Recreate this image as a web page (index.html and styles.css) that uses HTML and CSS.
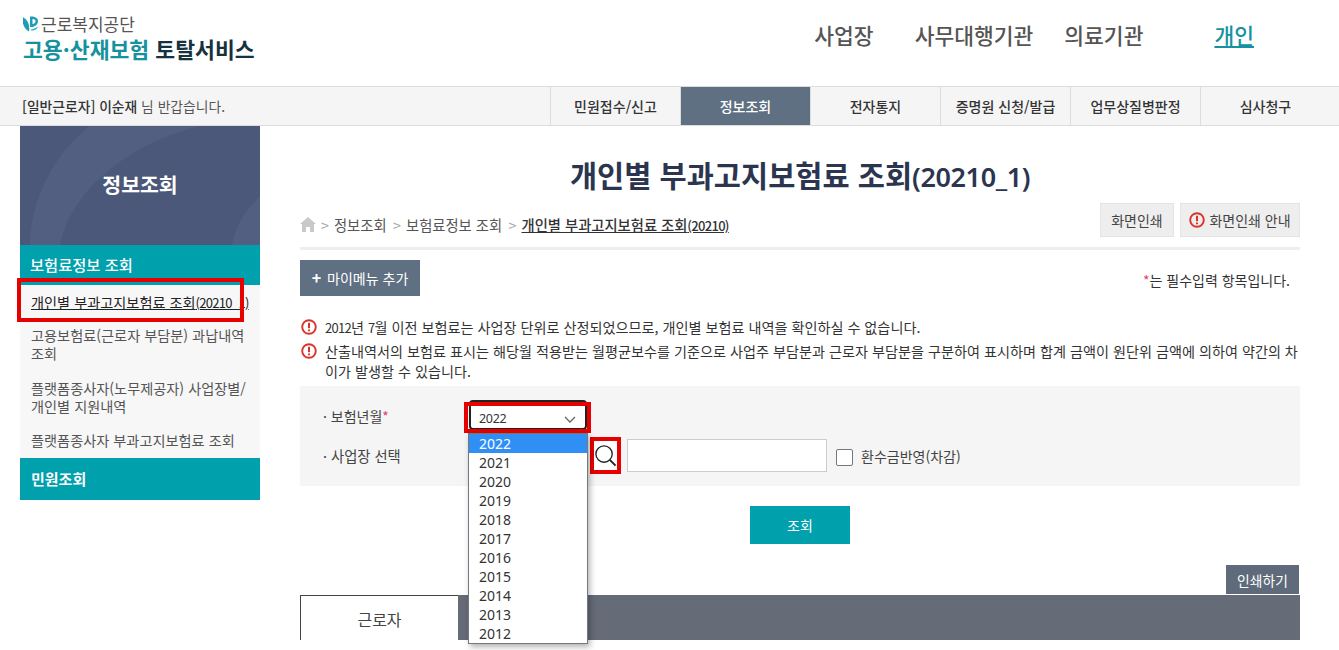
FILE: index.html
```html
<!DOCTYPE html>
<html lang="ko">
<head>
  <meta charset="UTF-8" />
  <title>개인별 부과고지보험료 조회</title>
  <link rel="stylesheet" href="styles.css">
</head>
<body>

<header class="top">
  <div class="brand">
    <div class="brand-org">
      <svg class="brand-mark" viewBox="0 0 15 16" width="15" height="16">
        <path d="M0 1 C-1 8 1 13 6 15.500 C7 9 5 4 0 1Z" fill="#1f9db5"/>
        <path d="M7 0.500 L7 11 C11 11.500 15 9 15 5 C15 1.500 11 0 7 0.500Z" fill="#1f9db5"/>
        <path d="M7 14 C10 15.500 14 14 15 10.500 C13 12 10 13 7 14Z" fill="#2fb0c0"/>
        <path d="M9.500 3 L9.500 8 C11.500 8 12.500 6.500 12.500 5 C12.500 4 11.500 3 9.500 3Z" fill="#fff"/>
      </svg>
      <span>근로복지공단</span>
    </div>
    <div class="brand-name"><em>고용·산재보험</em> 토탈서비스</div>
  </div>
  <nav class="top-nav">
    <a>사업장</a>
    <a>사무대행기관</a>
    <a>의료기관</a>
    <a class="on">개인</a>
  </nav>
</header>

<div class="subbar">
  <p class="hello">[일반근로자] 이순재 <span>님 반갑습니다.</span></p>
  <ul class="tabs">
    <li>민원접수/신고</li>
    <li class="on">정보조회</li>
    <li>전자통지</li>
    <li>증명원 신청/발급</li>
    <li>업무상질병판정</li>
    <li>심사청구</li>
  </ul>
</div>

<div class="wrap">
  <aside class="side">
    <div class="side-hero">
      <svg class="side-bg" viewBox="0 0 240 119" preserveAspectRatio="none">
        <path d="M40 119 C50 70 100 20 180 0 L70 0 C30 30 10 80 10 119Z" fill="#535f80"/>
        <path d="M240 70 C225 85 215 100 212 119 L240 119Z" fill="#535f80"/>
      </svg>
      <strong>정보조회</strong>
    </div>
    <h3 class="side-head">보험료정보 조회</h3>
    <ul class="side-list">
      <li class="cur"><a>개인별 부과고지보험료 조회<span class="num">(20210_1)</span></a><i class="mark mark-side"></i></li>
      <li>고용보험료(근로자 부담분) 과납내역 조회</li>
      <li>플랫폼종사자(노무제공자) 사업장별/ 개인별 지원내역</li>
      <li>플랫폼종사자 부과고지보험료 조회</li>
    </ul>
    <h3 class="side-head side-head2">민원조회</h3>
  </aside>

  <main class="main">
    <h1>개인별 부과고지보험료 조회<span class="h1-num">(20210_1)</span></h1>

    <div class="crumbs">
      <div class="crumb-path">
        <svg viewBox="0 0 16 15" width="16" height="15"><path d="M8 0 L16 7 L14 7 L14 15 L10 15 L10 10 L6 10 L6 15 L2 15 L2 7 L0 7Z" fill="#c9c9c9"/></svg>
        <span class="gt">&gt;</span><span class="crumb">정보조회</span>
        <span class="gt">&gt;</span><span class="crumb">보험료정보 조회</span>
        <span class="gt">&gt;</span><b>개인별 부과고지보험료 조회<span class="num">(20210)</span></b>
      </div>
      <div class="crumb-btns">
        <button class="gray-btn btn-print">화면인쇄</button>
        <button class="gray-btn btn-guide">
          <svg class="warn" viewBox="0 0 16 16" width="16" height="16"><circle cx="8" cy="8" r="6.800" fill="none" stroke="#d9342b" stroke-width="1.900"/><path d="M8 3.800V9.200M8 10.600V12.200" stroke="#d9342b" stroke-width="2"/></svg>
          화면인쇄 안내
        </button>
      </div>
    </div>

    <div class="tools">
      <button class="menu-add"><b>+</b> 마이메뉴 추가</button>
      <p class="req"><span>*</span>는 필수입력 항목입니다.</p>
    </div>

    <ul class="notes">
      <li>
        <svg class="warn" viewBox="0 0 16 16" width="16" height="16"><circle cx="8" cy="8" r="6.800" fill="none" stroke="#d9342b" stroke-width="1.900"/><path d="M8 3.800V9.200M8 10.600V12.200" stroke="#d9342b" stroke-width="2"/></svg>
        <span><span class="num">2012</span>년 <span class="num">7</span>월 이전 보험료는 사업장 단위로 산정되었으므로, 개인별 보험료 내역을 확인하실 수 없습니다.</span>
      </li>
      <li>
        <svg class="warn" viewBox="0 0 16 16" width="16" height="16"><circle cx="8" cy="8" r="6.800" fill="none" stroke="#d9342b" stroke-width="1.900"/><path d="M8 3.800V9.200M8 10.600V12.200" stroke="#d9342b" stroke-width="2"/></svg>
        <span>산출내역서의 보험료 표시는 해당월 적용받는 월평균보수를 기준으로 사업주 부담분과 근로자 부담분을 구분하여 표시하며 합계 금액이 원단위 금액에 의하여 약간의 차이가 발생할 수 있습니다.</span>
      </li>
    </ul>

    <div class="search-box">
      <div class="row">
        <label class="lbl lbl-year">· 보험년월<span>*</span></label>
        <div class="select-wrap">
          <div class="select">2022
            <svg viewBox="0 0 12 7" width="12" height="7"><path d="M1 1 L6 6 L11 1" fill="none" stroke="#666" stroke-width="1.300"/></svg>
          </div>
          <i class="mark mark-select"></i>
          <ul class="dropdown">
            <li class="sel">2022</li>
            <li>2021</li><li>2020</li><li>2019</li><li>2018</li><li>2017</li>
            <li>2016</li><li>2015</li><li>2014</li><li>2013</li><li>2012</li>
          </ul>
        </div>
      </div>
      <div class="row row2">
        <label class="lbl">· 사업장 선택</label>
        <div class="spacer"></div>
        <div class="find">
          <svg viewBox="0 0 24 24" width="23" height="23"><circle cx="10.500" cy="10.500" r="8.500" fill="none" stroke="#222" stroke-width="1.400"/><path d="M16.500 16.500 L22.500 22.500" stroke="#222" stroke-width="2"/></svg>
          <i class="mark mark-find"></i>
        </div>
        <div class="field"></div>
        <span class="check"></span>
        <span class="check-lbl">환수금반영(차감)</span>
      </div>
    </div>

    <div class="go"><button class="go-btn">조회</button></div>

    <div class="print-row"><button class="print-btn">인쇄하기</button></div>

    <div class="result-tabs">
      <div class="rtab">근로자</div>
    </div>
  </main>
</div>

</body>
</html>
```

FILE: styles.css
```css
* { margin: 0; padding: 0; box-sizing: border-box; }
html, body { height: 650px; overflow: hidden; }
body {
  background: #fff;
  color: #333;
  font-family: "Noto Sans CJK KR", "Noto Sans", sans-serif;
  font-size: 14px;
}
ul { list-style: none; }
button { font-family: inherit; border: 0; cursor: pointer; }

/* top */
.top {
  display: flex;
  justify-content: space-between;
  height: 86px;
  padding: 13px 85px 0 23px;
}
.brand-org {
  display: flex;
  align-items: center;
  gap: 3px;
  height: 22px;
  font-size: 17px;
  line-height: 22px;
  color: #555;
}
.brand-name {
  margin-top: 1px;
  font-size: 21.600px;
  line-height: 26px;
  font-weight: 700;
  color: #16323e;
}
.brand-name em { font-style: normal; color: #16919e; }
.top-nav {
  display: flex;
  gap: 31px;
  padding-top: 6px;
  font-size: 21.500px;
  line-height: 32px;
  color: #555;
}
.top-nav a { font-weight: 500; }
.top-nav a:nth-child(2) { margin-left: 10px; }
.top-nav a.on {
  margin-left: 40px;
  color: #1592a2;
  font-weight: 500;
  text-decoration: underline;
}

.subbar {
  display: flex;
  justify-content: space-between;
  height: 40px;
  padding: 0 9px 0 22px;
  background: #f5f5f6;
  border-top: 1px solid #ddd;
  border-bottom: 1px solid #ddd;
}
.hello { font-size: 13.800px; line-height: 38px; color: #333; font-weight: 500; }
.hello span { font-weight: 400; color: #555; }
.tabs { display: flex; }
.tabs li {
  width: 130px;
  height: 38px;
  line-height: 38px;
  text-align: center;
  font-size: 14px;
  font-weight: 500;
  color: #333;
  border-left: 1px solid #ddd;
}
.tabs li.on { background: #5f7083; color: #fff; }

.wrap { display: flex; padding: 0 39px 0 20px; gap: 40px; }

/* side */
.side { width: 240px; flex: none; }
.side-hero {
  position: relative;
  height: 119px;
  padding-bottom: 4px;
  background: #4b5879;
  display: flex;
  align-items: center;
  justify-content: center;
  color: #fff;
  font-size: 20.500px;
}
.side-bg { position: absolute; top: 0; left: 0; width: 100%; height: 100%; }
.side-hero strong { position: relative; }
.side-head {
  height: 40px;
  padding-left: 10px;
  background: #00a0ad;
  color: #fff;
  font-size: 15.300px;
  line-height: 38px;
  font-weight: 500;
}
.side-head2 { height: 42px; font-size: 15px; line-height: 41px; font-weight: 700; padding-left: 11px; }
.side-list {
  background: #f7f7f8;
  padding: 8px 10px 0 11px;
  height: 173px;
  font-size: 14.200px;
  line-height: 18px;
  color: #555;
  word-break: keep-all;
}
.side-list li { margin-bottom: 16.500px; position: relative; }
.side-list li.cur { white-space: nowrap; margin-bottom: 15px; }
.side-list li.cur a { color: #222; text-decoration: underline; }
.num { font-size: 13px; letter-spacing: -.7px; line-height: 1; }

/* red notes drawn over the screen */
.mark { position: absolute; border: 4px solid #e60000; display: block; pointer-events: none; }
.mark-side { left: -14px; top: -15px; width: 227px; height: 44px; }
.mark-select { left: -5px; top: 2px; width: 127px; height: 31px; }
.mark-find { left: 0; top: 0; width: 31px; height: 37px; }

/* main */
.main { width: 1000px; flex: none; }
h1 {
  text-align: center;
  font-size: 29.500px;
  line-height: 40px;
  padding-top: 28px;
  padding-bottom: 3px;
  font-weight: 700;
  color: #2b3550;
  box-sizing: content-box;
  height: 40px;
}
.h1-num { font-family: "Noto Sans", sans-serif; font-size: 27px; font-weight: 600; letter-spacing: -.4px; line-height: 1; }
.crumbs {
  display: flex;
  justify-content: space-between;
  align-items: flex-end;
  height: 53px;
  padding-bottom: 10px;
  border-bottom: 3px solid #eee;
}
.crumb-path { display: flex; align-items: center; gap: 4px; margin-bottom: 3px; font-size: 14.300px; color: #555; height: 20px; }
.crumb-path .gt { color: #aaa; margin: 0 1px 0 1px; }
.crumb-path .crumb { margin-right: 1.500px; }
.crumb-path b { font-weight: 500; color: #333; text-decoration: underline; }
.crumb-btns { display: flex; gap: 6px; }
.gray-btn {
  display: flex;
  align-items: center;
  justify-content: center;
  gap: 4px;
  height: 34px;
  background: #eee;
  border: 1px solid #e4e4e4;
  font-size: 14px;
  color: #444;
}
.btn-print { width: 74px; }
.btn-guide { width: 120px; }
.tools { display: flex; justify-content: space-between; align-items: center; margin-top: 10px; height: 36px; }
.menu-add {
  width: 120px;
  height: 36px;
  padding-bottom: 3px;
  background: #5f7083;
  color: #fff;
  font-size: 14px;
}
.menu-add b { font-size: 16px; margin-right: 2px; }
.req { padding: 4px 10px 0 0; font-size: 14px; color: #333; }
.req span { color: #e0455a; }

.notes { margin-top: 21px; font-size: 14.150px; line-height: 20px; color: #333; }
.notes li { display: flex; gap: 8px; margin-bottom: 4px; }
.notes .warn { flex: none; margin: 2px 0 0 1px; }
.notes li > span { word-break: break-all; }

.search-box {
  height: 100px;
  margin-top: 5px;
  background: #f5f5f5;
  padding: 14px 0 0 23px;
}
.row { display: flex; align-items: center; height: 32px; }
.row2 { margin-top: 5px; height: 37px; }
.lbl { width: 146px; font-size: 14.300px; color: #444; }
.lbl-year { font-size: 14px; }
.lbl span { color: #e0455a; }
.select-wrap { position: relative; width: 118px; height: 32px; }
.select {
  position: absolute;
  top: 0;
  left: 0;
  width: 118px;
  height: 30px;
  padding: 8px 9px 0 8px;
  background: #fff;
  border: 2px solid #222;
  border-radius: 4px;
  font-family: "Noto Sans", sans-serif;
  font-size: 12.500px;
  letter-spacing: -.3px;
  line-height: 16px;
  display: flex;
  justify-content: space-between;
  align-items: center;
}
.dropdown {
  position: absolute;
  top: 33px;
  left: -1px;
  width: 120px;
  height: 211px;
  background: #fff;
  border: 1px solid #777;
  box-shadow: 2px 3px 6px rgba(0,0,0,.3);
  font-family: "Noto Sans", sans-serif;
  font-size: 14px;
  line-height: 19px;
  color: #333;
  z-index: 5;
  overflow: hidden;
}
.dropdown li { padding-left: 10px; height: 19px; }
.dropdown li.sel { background: #2f8ff5; color: #fff; }
.spacer { width: 121px; }
.find {
  position: relative;
  width: 31px;
  height: 37px;
  display: flex;
  align-items: center;
  justify-content: center;
  margin-right: 6px;
  background: #fff;
}
.field { width: 200px; height: 33px; background: #fff; border: 1px solid #ccc; }
.check { width: 17px; height: 17px; margin: 4px 0 0 9px; background: #fff; border: 1px solid #777; border-radius: 2px; }
.check-lbl { margin-left: 8px; font-size: 14px; color: #444; }

.go { display: flex; justify-content: center; margin-top: 20px; }
.go-btn { width: 100px; height: 38px; background: #00a0ad; color: #fff; font-size: 14px; }
.print-row { display: flex; justify-content: flex-end; margin-top: 21px; }
.print-btn { width: 73px; height: 29px; margin-right: 1px; background: #5f6b7a; color: #fff; font-size: 13.800px; }
.result-tabs { margin-top: 1px; height: 45px; background: #666b78; }
.rtab {
  width: 158px;
  height: 45px;
  background: #fff;
  border-top: 1px solid #444;
  border-left: 1px solid #444;
  text-align: center;
  line-height: 46px;
  font-size: 16px;
  color: #444;
}
```
